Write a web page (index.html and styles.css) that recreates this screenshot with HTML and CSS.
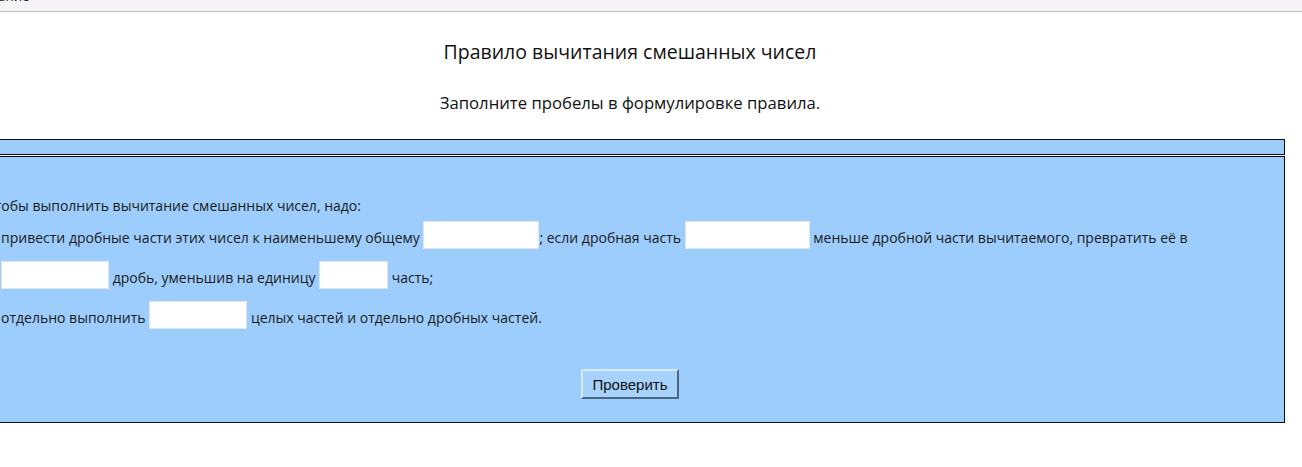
FILE: index.html
```html
<!DOCTYPE html>
<html lang="ru">
<head>
<meta charset="utf-8">
<title>Правило вычитания смешанных чисел</title>
<link rel="stylesheet" href="styles.css">
</head>
<body>
<div class="topbar"><span class="topbar-text">Задание</span></div>
<div class="page">
  <h1 class="title">Правило вычитания смешанных чисел</h1>
  <p class="subtitle">Заполните пробелы в формулировке правила.</p>
  <div class="strip"></div>
  <div class="task">
    <p class="lead">Чтобы выполнить вычитание смешанных чисел, надо:</p>
    <div class="rows">
      <p class="row">привести дробные части этих чисел к наименьшему общему <input class="gap w1" type="text">; если дробная часть <input class="gap w2" type="text"> меньше дробной части вычитаемого, превратить её в</p>
      <p class="row"><input class="gap w3" type="text"> дробь, уменьшив на единицу <input class="gap w4" type="text"> часть;</p>
      <p class="row">отдельно выполнить <input class="gap w5" type="text"> целых частей и отдельно дробных частей.</p>
    </div>
    <div class="actions"><button class="check" type="button">Проверить</button></div>
  </div>
</div>
</body>
</html>
```
FILE: styles.css
```css
html, body {
  margin: 0;
  padding: 0;
  background: #ffffff;
  overflow: hidden;
}
body {
  font-family: "Open Sans", "DejaVu Sans", sans-serif;
  color: #1a1a1a;
}
.topbar {
  height: 11px;
  background: #f6f3f6;
  border-bottom: 1px solid #bcbcbc;
  overflow: hidden;
}
.topbar-text {
  display: block;
  font-size: 13px;
  line-height: 13px;
  margin-top: -10px;
  margin-left: -24px;
  color: #222;
}
.page {
  margin-left: -25px;
  width: 1310px;
}
.title {
  margin: 27px 0 0;
  font-size: 19.5px;
  line-height: 26px;
  font-weight: 400;
  text-align: center;
  color: #111;
}
.subtitle {
  margin: 27px 0 0;
  font-size: 16.7px;
  line-height: 22px;
  text-align: center;
  color: #111;
}
.strip {
  margin-top: 25px;
  height: 14px;
  background: #9dcdfd;
  border: 1px solid #0a0a14;
}
.task {
  margin-top: 1px;
  background: #9dcdfd;
  border: 1px solid #0a0a14;
  padding: 38px 0 23px;
  font-size: 14px;
}
.lead {
  margin: 0 0 1px;
  padding-left: 9px;
  line-height: 22px;
}
.rows {
  padding-left: 25px;
}
.row {
  margin: 0;
  line-height: 40px;
  white-space: nowrap;
}
.gap {
  box-sizing: border-box;
  height: 28px;
  margin: 0;
  padding: 0 4px;
  border: 1px solid #dfe6ee;
  background: #ffffff;
  font: inherit;
  vertical-align: 3px;
}
.w1 { width: 116px; }
.w2 { width: 125px; }
.w3 { width: 108px; }
.w4 { width: 69px; }
.w5 { width: 98px; }
.actions {
  margin-top: 31px;
  display: flex;
  justify-content: center;
}
.check {
  width: 98px;
  height: 30px;
  padding: 0;
  font-family: "Liberation Sans", Arial, sans-serif;
  font-size: 15px;
  color: #111;
  background: #a6d2fb;
  border: 2px solid;
  border-color: #d6ebfe #4d6680 #4d6680 #d6ebfe;
}
```
